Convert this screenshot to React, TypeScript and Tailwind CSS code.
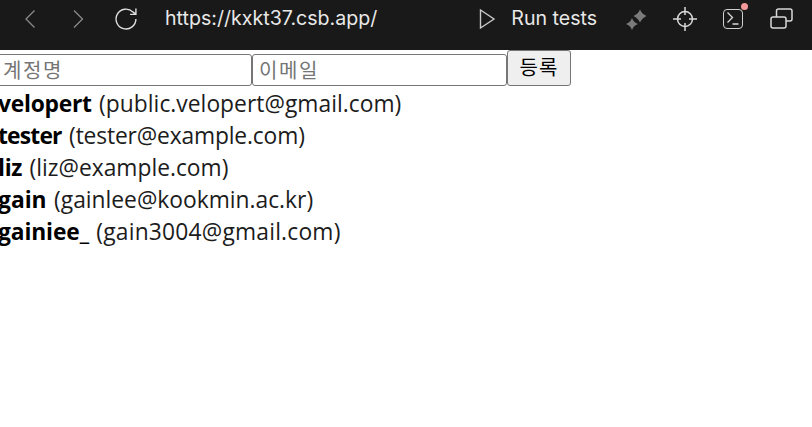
import React from "react";

const users = [
  { name: "velopert", email: "public.velopert@gmail.com", nameClass: "tracking-[-0.25px]", emailClass: "tracking-[0.03px]" },
  { name: "tester", email: "tester@example.com", nameClass: "tracking-[-0.8px]", emailClass: "tracking-[-0.15px]" },
  { name: "liz", email: "liz@example.com", nameClass: "tracking-[-0.3px]", emailClass: "tracking-[0px]" },
  { name: "gain", email: "gainlee@kookmin.ac.kr", nameClass: "tracking-[0px]", emailClass: "tracking-[0px]" },
  { name: "gainiee_", email: "gain3004@gmail.com", nameClass: "tracking-[-0.12px]", emailClass: "tracking-[0.2px]" },
];

const kr = "font-['Noto_Sans','Noto_Sans_CJK_KR',sans-serif]";

export default function App() {
  return (
    <div className="h-[427px] w-[812px] overflow-hidden bg-white">
      <header className="flex h-[50px] items-center bg-[#191919] pb-[12px] text-[#e8e8e8] font-['Inter',sans-serif] whitespace-nowrap">
        <svg className="ml-[24px] flex-none" width="14" height="20" viewBox="0 0 14 20" fill="none" stroke="#8a8a8a" strokeWidth="1.3"><path d="M10.500 1.500 2 10l8.500 8.500" /></svg>
        <svg className="ml-[34px] flex-none" width="14" height="20" viewBox="0 0 14 20" fill="none" stroke="#8a8a8a" strokeWidth="1.3"><path d="M2 1.500 10.500 10 2 18.500" /></svg>
        <svg className="ml-[26px] flex-none" width="28" height="28" viewBox="0 0 24 24" fill="none" stroke="#e0e0e0" strokeWidth="1.2"><path d="M20.500 12a8.500 8.500 0 1 1-2.600-6.100L20.500 8M20.500 3v5h-5" /></svg>
        <span className="ml-[25px] text-[19.600px]">https://kxkt37.csb.app/</span>
        <svg className="ml-[101px] flex-none" width="18" height="22" viewBox="0 0 18 22" fill="none" stroke="#c8c8c8" strokeWidth="1.4"><path d="M2.500 2v18L16 11z" /></svg>
        <span className="ml-[15px] text-[19.600px]">Run tests</span>
        <svg className="ml-[28px] flex-none" width="22" height="22" viewBox="0 0 22 22" fill="#7b7b7b"><path d="M15 1.500Q17 6 21.500 8 17 10 15 14.500 13 10 8.500 8 13 6 15 1.500zM7 10Q8.600 14.400 13 16 8.600 17.600 7 22 5.400 17.600 1 16 5.400 14.400 7 10z" /></svg>
        <svg className="ml-[26px] flex-none" width="24" height="24" viewBox="0 0 24 24" fill="none" stroke="#d8d8d8" strokeWidth="1.5"><circle cx="12" cy="12" r="7.500" /><path d="M12 0v8M12 16v8M0 12h8M16 12h8" /></svg>
        <div className="relative ml-[26px] h-[20px] w-[20px] flex-none rounded-[4px] border-[1.5px] border-[#d0d0d0]">
          <svg className="absolute left-[1px] top-[1px]" width="15" height="15" viewBox="0 0 15 15" fill="none" stroke="#d8d8d8" strokeWidth="1.3"><path d="M2.500 1.500l5 5-5 5M7.500 13h6" /></svg>
          <span className="absolute -right-[6px] -top-[7px] h-[7px] w-[7px] rounded-full bg-[#f49a9a]" />
        </div>
        <svg className="ml-[26px] flex-none" width="24" height="22" viewBox="0 0 24 22" fill="none" stroke="#d8d8d8" strokeWidth="1.5"><path d="M7.500 9V3a2 2 0 0 1 2-2h11.500a2 2 0 0 1 2 2v8a2 2 0 0 1-2 2H17" /><rect x="2" y="9" width="15" height="11" rx="2" /></svg>
      </header>
      <form className="-ml-[4px] flex h-[36px] items-end">
        <input placeholder="계정명" className={`h-[32px] w-[256px] rounded-[3px] border border-[#767676] px-[6px] text-[20px] tracking-[1.6px] placeholder:text-[#757575] ${kr}`} />
        <input placeholder="이메일" className={`h-[32px] w-[255px] rounded-[3px] border border-[#767676] px-[6px] text-[20px] tracking-[1.6px] placeholder:text-[#757575] ${kr}`} />
        <button type="button" className={`h-[36px] w-[64px] rounded-[3px] border border-[#767676] bg-[#efefef] text-[20px] tracking-[1px] text-black ${kr}`}>등록</button>
      </form>
      <ul className="-ml-[2px] mt-[2px] text-[22.800px] leading-[32px] text-[#1c1c1c] font-['Open_Sans',sans-serif] [word-spacing:1.5px]">
        {users.map((u) => (
          <li key={u.name}><b className={`font-bold text-black ${u.nameClass}`}>{u.name}</b> <span className={u.emailClass}>({u.email})</span></li>
        ))}
      </ul>
    </div>
  );
}
